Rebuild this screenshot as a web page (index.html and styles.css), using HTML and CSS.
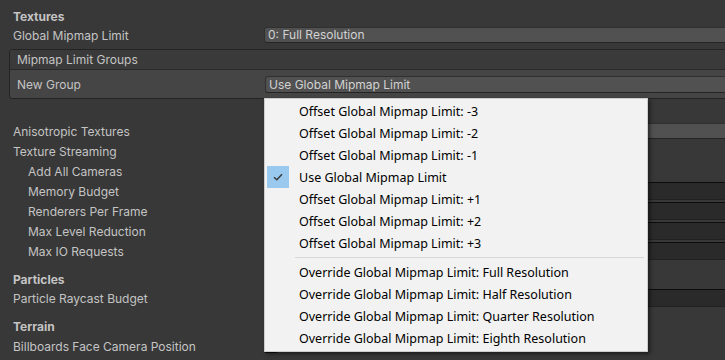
FILE: index.html
```html
<!DOCTYPE html>
<html lang="en">
<head>
  <meta charset="UTF-8" />
  <title>Quality Settings</title>
  <link rel="stylesheet" href="styles.css">
</head>
<body>

  <div class="inspector">
    <div class="title">Textures</div>
    <div class="row tight">
      <span class="label">Global Mipmap Limit</span>
      <div class="popup-field">0: Full Resolution</div>
    </div>

    <div class="group-box">
      <div class="group-head">Mipmap Limit Groups</div>
      <div class="group-row">
        <span class="label">New Group</span>
        <div class="popup-field tall">Use Global Mipmap Limit</div>
      </div>
    </div>

    <div class="row spaced">
      <span class="label">Anisotropic Textures</span>
      <div class="popup-field"></div>
    </div>
    <div class="row">
      <span class="label">Texture Streaming</span>
      <span class="checkbox"></span>
    </div>
    <div class="row indent">
      <span class="label">Add All Cameras</span>
      <span class="checkbox"></span>
    </div>
    <div class="row indent">
      <span class="label">Memory Budget</span>
      <div class="int-field"></div>
    </div>
    <div class="row indent">
      <span class="label">Renderers Per Frame</span>
      <div class="int-field"></div>
    </div>
    <div class="row indent">
      <span class="label">Max Level Reduction</span>
      <div class="int-field"></div>
    </div>
    <div class="row indent">
      <span class="label">Max IO Requests</span>
      <div class="int-field"></div>
    </div>

    <div class="title section">Particles</div>
    <div class="row">
      <span class="label">Particle Raycast Budget</span>
      <div class="int-field"></div>
    </div>

    <div class="title section">Terrain</div>
    <div class="row tall-row">
      <span class="label">Billboards Face Camera Position</span>
      <span class="checkbox"></span>
    </div>
    <div class="row">
      <span class="label"></span>
      <span class="checkbox"></span>
    </div>
  </div>

  <div class="menu">
    <div class="item"><span class="mark"></span>Offset Global Mipmap Limit: -3</div>
    <div class="item"><span class="mark"></span>Offset Global Mipmap Limit: -2</div>
    <div class="item"><span class="mark"></span>Offset Global Mipmap Limit: -1</div>
    <div class="item">
      <span class="mark on">
        <svg width="10" height="8" viewBox="0 0 10 8"><path d="M1 4.2 L3.8 6.8 L9 1.2" fill="none" stroke="#3a3a3a" stroke-width="1.5"/></svg>
      </span>Use Global Mipmap Limit
    </div>
    <div class="item"><span class="mark"></span>Offset Global Mipmap Limit: +1</div>
    <div class="item"><span class="mark"></span>Offset Global Mipmap Limit: +2</div>
    <div class="item"><span class="mark"></span>Offset Global Mipmap Limit: +3</div>
    <div class="separator"></div>
    <div class="item"><span class="mark"></span>Override Global Mipmap Limit: Full Resolution</div>
    <div class="item"><span class="mark"></span>Override Global Mipmap Limit: Half Resolution</div>
    <div class="item"><span class="mark"></span>Override Global Mipmap Limit: Quarter Resolution</div>
    <div class="item"><span class="mark"></span>Override Global Mipmap Limit: Eighth Resolution</div>
  </div>

</body>
</html>
```

FILE: styles.css
```css
body {
  margin: 0;
  background-color: #383838;
  font-family: Inter, "Noto Sans", sans-serif;
  font-size: 12px;
  color: #c4c4c4;
  overflow: hidden;
}

.inspector {
  width: 760px;
  padding: 8px 0 0 9px;
}

.title {
  height: 18px;
  line-height: 18px;
  padding-left: 4px;
  font-weight: bold;
}

.title.section {
  margin-top: 9px;
  line-height: 20px;
}

.row {
  display: grid;
  grid-template-columns: 251px 1fr;
  align-items: center;
  height: 20px;
  padding-left: 4px;
}

.row.tight {
  height: 18px;
}

.row.spaced {
  margin-top: 22px;
}

.row.tall-row {
  height: 22px;
}

.row.indent .label {
  padding-left: 15px;
}

.label {
  white-space: nowrap;
}

.popup-field {
  box-sizing: border-box;
  height: 16px;
  line-height: 14px;
  padding-left: 3px;
  background-color: #515151;
  border: 1px solid #303030;
  border-bottom-color: #242424;
  border-radius: 3px;
  color: #d2d2d2;
}

.popup-field.tall {
  height: 17px;
  line-height: 15px;
}

.int-field {
  box-sizing: border-box;
  height: 18px;
  background-color: #2a2a2a;
  border: 1px solid #212121;
  border-top-color: #0d0d0d;
  border-radius: 3px;
}

.checkbox {
  box-sizing: border-box;
  width: 14px;
  height: 14px;
  background-color: #2a2a2a;
  border: 1px solid #0d0d0d;
  border-radius: 2px;
}

.group-box {
  margin-top: 5px;
  border: 1px solid #242424;
  border-radius: 3px;
  background-color: #454545;
}

.group-head {
  height: 19px;
  line-height: 19px;
  padding-left: 7px;
  background-color: #3a3a3a;
  border-bottom: 1px solid #2a2a2a;
  border-radius: 3px 3px 0 0;
}

.group-row {
  display: grid;
  grid-template-columns: 248px 1fr;
  align-items: center;
  height: 28px;
  padding-left: 7px;
}

.menu {
  position: absolute;
  left: 264px;
  top: 98px;
  width: 384px;
  height: 254px;
  box-sizing: border-box;
  padding: 1px 2px;
  background-color: #f2f2f2;
  border: 1px solid #cccccc;
  box-shadow: 2px 2px 4px rgba(0, 0, 0, 0.5);
  font-family: "Noto Sans", sans-serif;
  font-size: 12.5px;
  color: #000;
}

.item {
  display: flex;
  align-items: center;
  height: 22px;
  white-space: nowrap;
}

.mark {
  display: flex;
  align-items: center;
  justify-content: center;
  width: 22px;
  height: 22px;
  margin-right: 10px;
}

.mark.on {
  background-color: #99c9ef;
}

.separator {
  height: 7px;
  margin: 0 1px 0 28px;
  background: linear-gradient(#d7d7d7, #d7d7d7) 0 3px / 100% 1px no-repeat;
}
```
